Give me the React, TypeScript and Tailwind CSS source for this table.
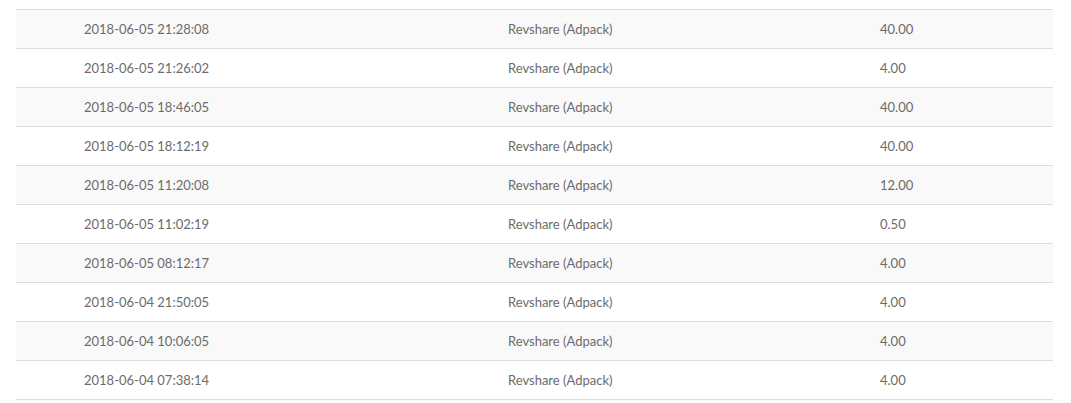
import React from 'react';

const rows = [
  { date: '2018-06-05 21:28:08', type: 'Revshare (Adpack)', amount: '40.00' },
  { date: '2018-06-05 21:26:02', type: 'Revshare (Adpack)', amount: '4.00' },
  { date: '2018-06-05 18:46:05', type: 'Revshare (Adpack)', amount: '40.00' },
  { date: '2018-06-05 18:12:19', type: 'Revshare (Adpack)', amount: '40.00' },
  { date: '2018-06-05 11:20:08', type: 'Revshare (Adpack)', amount: '12.00' },
  { date: '2018-06-05 11:02:19', type: 'Revshare (Adpack)', amount: '0.50' },
  { date: '2018-06-05 08:12:17', type: 'Revshare (Adpack)', amount: '4.00' },
  { date: '2018-06-04 21:50:05', type: 'Revshare (Adpack)', amount: '4.00' },
  { date: '2018-06-04 10:06:05', type: 'Revshare (Adpack)', amount: '4.00' },
  { date: '2018-06-04 07:38:14', type: 'Revshare (Adpack)', amount: '4.00' },
];

export default function App() {
  return (
    <div className="w-[1071px] h-[403px] bg-white pt-[9px] pl-4 font-['Lato','Liberation_Sans',sans-serif] text-[13px] text-[#6b6b6b]">
      <div className="w-[1037px] border-b border-[#dddddd]">
        {rows.map((row, i) => (
          <div
            key={i}
            className={`grid grid-cols-[424px_372px_241px] h-[39px] items-center pt-[2px] border-t border-[#dddddd] ${
              i % 2 === 0 ? 'bg-[#f9f9f9]' : 'bg-white'
            }`}
          >
            <span className="pl-[68px]">{row.date}</span>
            <span className="pl-[68px]">{row.type}</span>
            <span className="pl-[68px]">{row.amount}</span>
          </div>
        ))}
      </div>
    </div>
  );
}
